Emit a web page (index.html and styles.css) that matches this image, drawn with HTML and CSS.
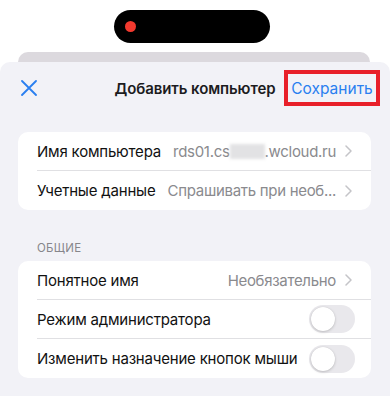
FILE: index.html
```html
<!DOCTYPE html>
<html lang="ru">
<head>
<meta charset="utf-8">
<link rel="stylesheet" href="styles.css">
</head>
<body>
<div class="status">
  <div class="island"><span class="rec"></span></div>
</div>
<div class="backcard"></div>
<div class="sheet">
  <div class="nav">
    <div class="nav-left">
      <svg class="close" width="16" height="16" viewBox="0 0 16 16"><path d="M1 1 L15 15 M15 1 L1 15" stroke="#2a7ff0" stroke-width="1.8" stroke-linecap="round" fill="none"/></svg>
    </div>
    <div class="title">Добавить компьютер</div>
    <div class="nav-right"><span class="save">Сохранить</span></div>
  </div>

  <div class="card">
    <div class="row">
      <span class="label">Имя компьютера</span>
      <span class="value">rds01.cs<span class="blur"></span>.wcloud.ru</span>
      <svg class="chev" width="7" height="12" viewBox="0 0 7 12"><path d="M1 1 L6 6 L1 11" stroke="#c4c4c8" stroke-width="1.5" fill="none" stroke-linecap="round" stroke-linejoin="round"/></svg>
    </div>
    <div class="row">
      <span class="label">Учетные данные</span>
      <span class="value">Спрашивать при необ...</span>
      <svg class="chev" width="7" height="12" viewBox="0 0 7 12"><path d="M1 1 L6 6 L1 11" stroke="#c4c4c8" stroke-width="1.5" fill="none" stroke-linecap="round" stroke-linejoin="round"/></svg>
    </div>
  </div>

  <div class="section">ОБЩИЕ</div>

  <div class="card">
    <div class="row">
      <span class="label">Понятное имя</span>
      <span class="value">Необязательно</span>
      <svg class="chev" width="7" height="12" viewBox="0 0 7 12"><path d="M1 1 L6 6 L1 11" stroke="#c4c4c8" stroke-width="1.5" fill="none" stroke-linecap="round" stroke-linejoin="round"/></svg>
    </div>
    <div class="row toggle-row">
      <span class="label">Режим администратора</span>
      <span class="toggle"><span class="knob"></span></span>
    </div>
    <div class="row toggle-row">
      <span class="label">Изменить назначение кнопок мыши</span>
      <span class="toggle"><span class="knob"></span></span>
    </div>
  </div>
</div>
</body>
</html>
```
FILE: styles.css
```css
html, body {
  margin: 0;
  padding: 0;
  background: #ffffff;
  font-family: Inter, "Noto Sans", "Liberation Sans", sans-serif;
  color: #111;
}
.status {
  height: 52px;
  padding-top: 10px;
  box-sizing: border-box;
}
.island {
  width: 156px;
  height: 33px;
  margin-left: 114px;
  background: #000;
  border-radius: 17px;
  display: flex;
  align-items: center;
  padding-left: 11px;
  box-sizing: border-box;
}
.rec {
  width: 11px;
  height: 11px;
  border-radius: 50%;
  background: #f2392e;
}
.backcard {
  height: 10px;
  margin: 0 20px 0 18px;
  background: #dcd9de;
  border-radius: 10px 10px 0 0;
}
.sheet {
  background: #f2f2f7;
  border-radius: 10px 10px 0 0;
  height: 334px;
  overflow: hidden;
}
.nav {
  height: 52px;
  display: grid;
  grid-template-columns: 1fr auto 1fr;
  align-items: center;
}
.nav-left {
  padding-left: 21px;
  display: flex;
  align-items: center;
}
.close { display: block; }
.title {
  font-size: 15px;
  font-weight: 600;
  color: #1c1c1e;
  letter-spacing: -0.1px;
}
.nav-right {
  justify-self: end;
  padding-right: 10px;
}
.save {
  display: flex;
  align-items: center;
  justify-content: center;
  width: 96px;
  height: 36px;
  box-sizing: border-box;
  border: 4px solid #e8202a;
  color: #2a7ff0;
  font-size: 15.5px;
}
.card {
  background: #fff;
  margin: 18px 19px 0 18px;
  border-radius: 10px;
  padding-left: 19px;
}
.row {
  height: 39px;
  display: flex;
  align-items: center;
  padding-right: 19px;
  box-sizing: border-box;
  border-bottom: 1px solid #e0e0e3;
  font-size: 15px;
}
.row:last-child { border-bottom: none; }
.label {
  color: #111;
  white-space: nowrap;
  flex: none;
  letter-spacing: -0.2px;
}
.value {
  margin-left: auto;
  color: #8a8a8e;
  white-space: nowrap;
  display: flex;
  align-items: center;
  letter-spacing: -0.3px;
}
.blur {
  display: inline-block;
  width: 35px;
  height: 15px;
  background: #e2e2e4;
  filter: blur(1.5px);
}
.chev {
  margin-left: 9px;
  flex: none;
}
.section {
  padding: 30px 0 5px 37px;
  font-size: 11.5px;
  line-height: 16px;
  color: #86868b;
  letter-spacing: 0.3px;
}
.section + .card { margin-top: 0; }
.toggle-row { padding-right: 16px; }
.toggle {
  margin-left: auto;
  width: 46px;
  height: 28px;
  border-radius: 14px;
  background: #e9e8ec;
  position: relative;
  flex: none;
}
.knob {
  position: absolute;
  left: 2px;
  top: 2px;
  width: 24px;
  height: 24px;
  border-radius: 50%;
  background: #fff;
  box-shadow: 0 1px 3px rgba(0,0,0,0.18), 0 0 1px rgba(0,0,0,0.12);
}
```
